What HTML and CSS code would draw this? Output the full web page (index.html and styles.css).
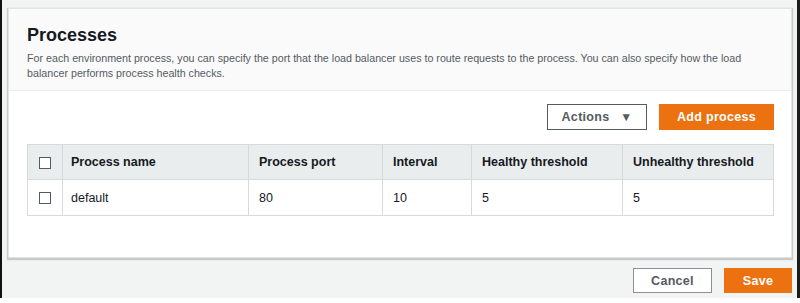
FILE: index.html
```html
<!DOCTYPE html>
<html>

<head lang="en">
	<meta charset="UTF-8">
	<title>Processes</title>
	<link rel="stylesheet" href="styles.css">
</head>

<body>
	<div class="frame">
		<div class="card">
			<div class="card-head">
				<h2>Processes</h2>
				<p>For each environment process, you can specify the port that the load balancer uses to route requests to the process. You can also specify how the load balancer performs process health checks.</p>
			</div>
			<div class="card-body">
				<div class="toolbar">
					<button class="btn" type="button">Actions <span class="caret">&#9660;</span></button>
					<button class="btn btn-primary" type="button">Add process</button>
				</div>
				<table class="grid">
					<thead>
						<tr>
							<th class="check"><span class="box"></span></th>
							<th class="c-name">Process name</th>
							<th class="c-port">Process port</th>
							<th class="c-int">Interval</th>
							<th class="c-hl">Healthy threshold</th>
							<th>Unhealthy threshold</th>
						</tr>
					</thead>
					<tbody>
						<tr>
							<td class="check"><span class="box"></span></td>
							<td class="c-name">default</td>
							<td>80</td>
							<td>10</td>
							<td>5</td>
							<td>5</td>
						</tr>
					</tbody>
				</table>
			</div>
		</div>
		<div class="footer">
			<button class="btn btn-cancel" type="button">Cancel</button>
			<button class="btn btn-primary btn-save" type="button">Save</button>
		</div>
	</div>
</body>

</html>
```

FILE: styles.css
```css
* {
	margin: 0;
	padding: 0;
	box-sizing: border-box;
}

body {
	background: #fff;
	font-family: "Liberation Sans", Arial, sans-serif;
	color: #16191f;
}

.frame {
	height: 298px;
	background: #f2f3f3;
	border-left: 2px solid #111;
	border-right: 3px solid #1b1b1b;
	padding: 8px 5px 0 6px;
}

.card {
	background: #fff;
	border: 1px solid #e1e4e4;
	box-shadow: 0 1px 1px 1px #c6caca;
	height: 250px;
}

.card-head {
	background: #fafafa;
	border-bottom: 1px solid #eaeded;
	height: 82px;
	padding: 15px 18px 0 18px;
}

.card-head h2 {
	font-size: 18px;
	font-weight: bold;
	color: #16191f;
	line-height: 22px;
}

.card-head p {
	font-size: 10.7px;
	line-height: 15px;
	color: #545b64;
	margin-top: 5px;
}

.card-body {
	padding: 13px 17px 0 18px;
}

.toolbar {
	display: flex;
	justify-content: flex-end;
	gap: 12px;
	margin-bottom: 14px;
}

.btn {
	height: 26px;
	border: 1px solid #545b64;
	background: #fff;
	color: #545b64;
	font-family: "Liberation Sans", Arial, sans-serif;
	font-size: 12.5px;
	font-weight: bold;
	letter-spacing: 0.3px;
	padding: 0 10px;
}

.toolbar .btn {
	width: 100px;
}

.toolbar .btn-primary {
	width: 115px;
}

.caret {
	font-size: 12px;
	margin-left: 7px;
}

.btn-primary {
	background: #ec7211;
	border-color: #ec7211;
	color: #fff;
}

.grid {
	width: 100%;
	border-collapse: collapse;
	font-size: 12.5px;
}

.grid th,
.grid td {
	border: 1px solid #d5dbdb;
	text-align: left;
	padding: 0 10px;
}

.grid th {
	background: #eaeded;
	height: 35px;
	font-weight: bold;
	color: #16191f;
}

.grid td {
	height: 36px;
	color: #16191f;
}

.grid .c-name {
	padding-left: 8px;
}

.grid .check {
	width: 35px;
	text-align: center;
	padding: 0;
}

.c-name {
	width: 186px;
}

.c-port {
	width: 134px;
}

.c-int {
	width: 89px;
}

.c-hl {
	width: 151px;
}

.box {
	display: inline-block;
	width: 12px;
	height: 12px;
	border: 1px solid #545b64;
	background: #fff;
	vertical-align: middle;
}

.footer {
	display: flex;
	justify-content: flex-end;
	gap: 12px;
	padding-top: 10px;
}

.btn-cancel {
	width: 79px;
	height: 25px;
	border-color: #879196;
}

.btn-save {
	width: 68px;
	height: 25px;
}
```
